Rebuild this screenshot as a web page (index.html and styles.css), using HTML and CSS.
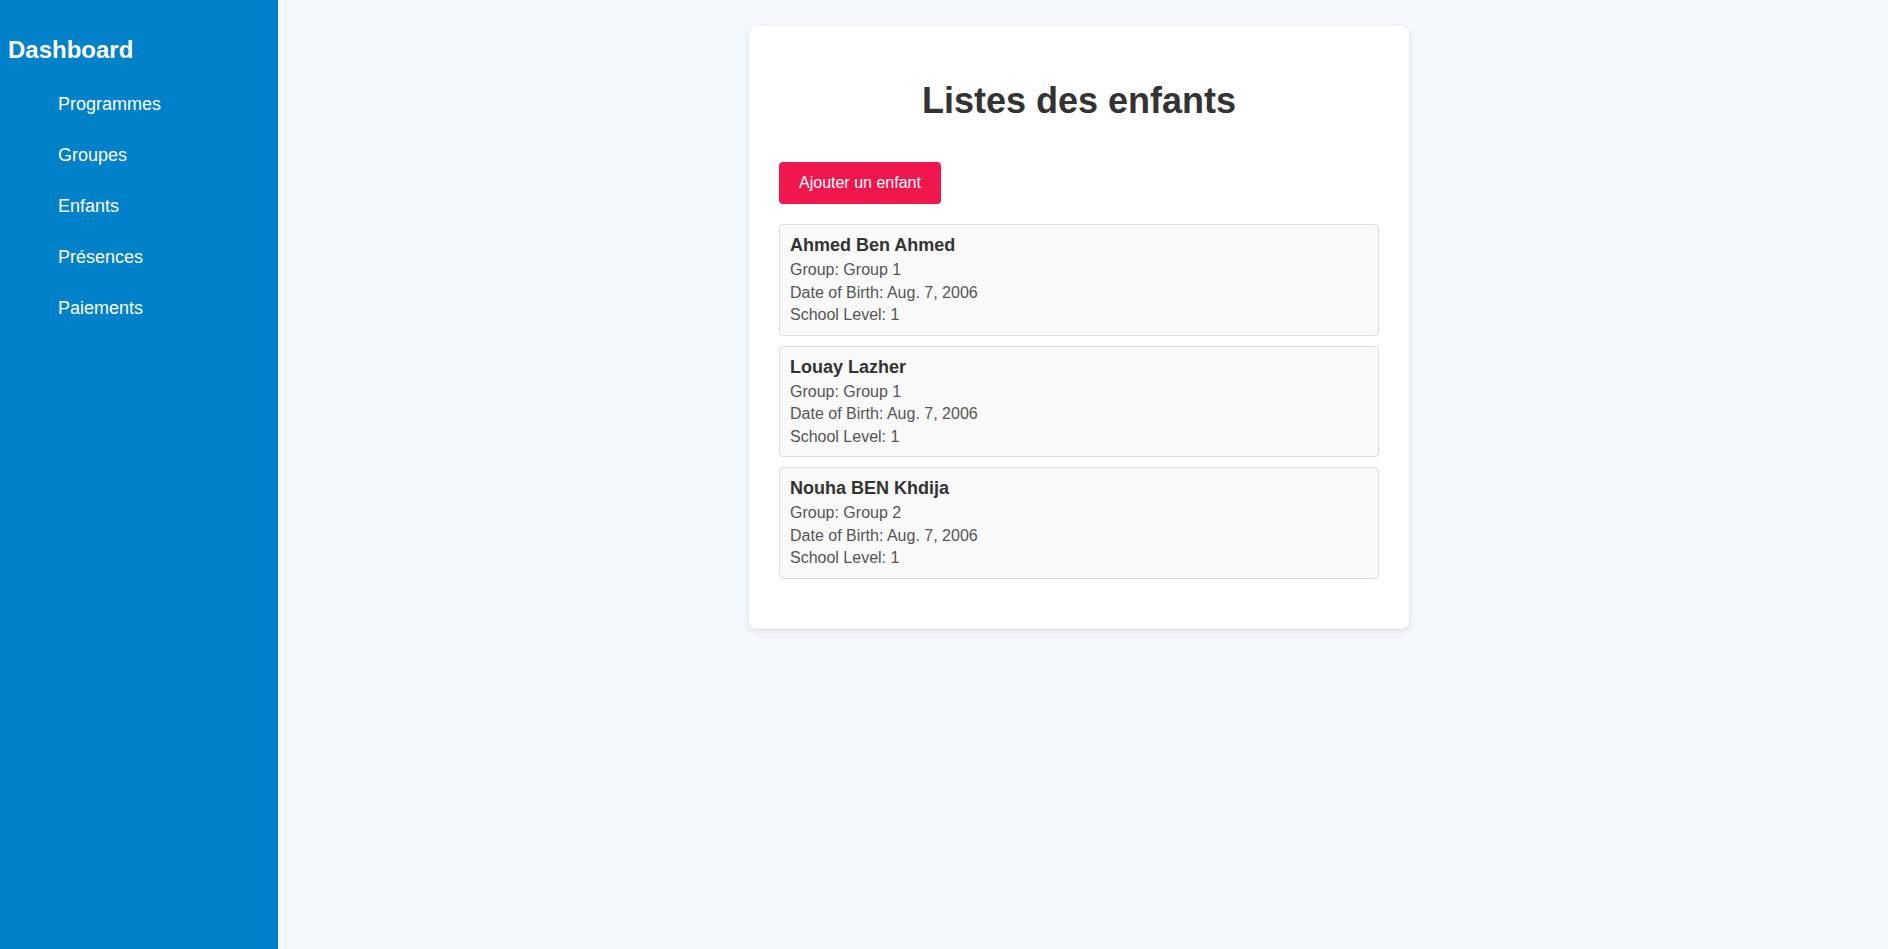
FILE: index.html
```html
<!DOCTYPE html>
<html lang="fr">
<head>
<meta charset="utf-8">
<title>Listes des enfants</title>
<link rel="stylesheet" href="styles.css">
</head>
<body>
<div class="layout">
  <aside class="sidebar">
    <h2 class="brand">Dashboard</h2>
    <ul class="nav">
      <li><a href="#">Programmes</a></li>
      <li><a href="#">Groupes</a></li>
      <li><a href="#">Enfants</a></li>
      <li><a href="#">Présences</a></li>
      <li><a href="#">Paiements</a></li>
    </ul>
  </aside>
  <main class="main">
    <section class="card">
      <h1 class="title">Listes des enfants</h1>
      <div class="actions"><a class="btn" href="#">Ajouter un enfant</a></div>
      <ul class="list">
        <li class="item">
          <div class="name">Ahmed Ben Ahmed</div>
          <div class="info">Group: Group 1</div>
          <div class="info">Date of Birth: Aug. 7, 2006</div>
          <div class="info">School Level: 1</div>
        </li>
        <li class="item">
          <div class="name">Louay Lazher</div>
          <div class="info">Group: Group 1</div>
          <div class="info">Date of Birth: Aug. 7, 2006</div>
          <div class="info">School Level: 1</div>
        </li>
        <li class="item">
          <div class="name">Nouha BEN Khdija</div>
          <div class="info">Group: Group 2</div>
          <div class="info">Date of Birth: Aug. 7, 2006</div>
          <div class="info">School Level: 1</div>
        </li>
      </ul>
    </section>
  </main>
</div>
</body>
</html>
```
FILE: styles.css
```css
* { box-sizing: border-box; }
html, body { margin: 0; padding: 0; }
body {
  font-family: "Liberation Sans", Arial, sans-serif;
  background: #f4f7fb;
  color: #333;
}
.layout {
  display: flex;
  min-height: 100vh;
}
.sidebar {
  width: 278px;
  flex: 0 0 278px;
  background: #0081c9;
  color: #fff;
  padding: 16px 8px;
}
.brand {
  font-size: 24px;
  font-weight: bold;
  margin: 20px 0 15px;
  line-height: normal;
}
.nav {
  list-style: none;
  margin: 0;
  padding: 0 0 0 40px;
}
.nav li a {
  display: block;
  color: #fff;
  text-decoration: none;
  font-size: 18px;
  padding: 15px 10px;
  line-height: normal;
}
.main {
  flex: 1;
  display: flex;
  justify-content: center;
  align-items: flex-start;
  padding: 26px 8px 0 0;
}
.card {
  width: 660px;
  background: #fff;
  border-radius: 8px;
  box-shadow: 0 2px 6px rgba(0, 0, 0, 0.1);
  padding: 30px;
}
.title {
  font-size: 36px;
  font-weight: bold;
  text-align: center;
  color: #333;
  margin: 24px 0 40px;
  line-height: normal;
}
.actions {
  margin: 0 0 20px;
}
.btn {
  display: inline-block;
  background: #ef174d;
  color: #fff;
  text-decoration: none;
  font-size: 16px;
  padding: 12px 20px;
  border-radius: 4px;
  line-height: normal;
}
.list {
  list-style: none;
  margin: 0 0 20px;
  padding: 0;
  display: flex;
  flex-direction: column;
  gap: 10px;
}
.item {
  background: #f9f9f9;
  border: 1px solid #ddd;
  border-radius: 4px;
  padding: 10px 10px 8px;
}
.name {
  font-size: 18px;
  font-weight: bold;
  color: #333;
  margin-bottom: 3px;
  line-height: normal;
}
.info {
  font-size: 16px;
  color: #555;
  line-height: 22.5px;
}
```
